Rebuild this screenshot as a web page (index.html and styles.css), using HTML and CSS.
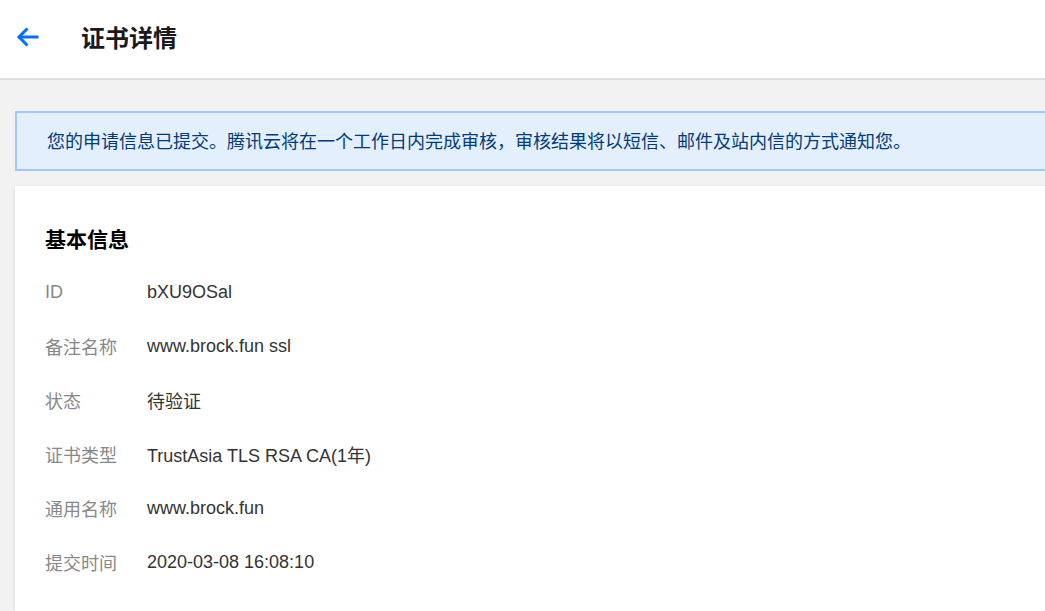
FILE: index.html
```html
<!DOCTYPE html>
<html lang="zh-CN">
<head>
<meta charset="utf-8">
<title>证书详情</title>
<link rel="stylesheet" href="styles.css">
</head>
<body>
<header class="topbar">
  <a class="back" href="#" aria-label="返回">
    <svg width="24" height="22" viewBox="0 0 24 22" fill="none" stroke="#006eff" stroke-width="3" stroke-linecap="butt" stroke-linejoin="miter">
      <path d="M22.5 11H3"/>
      <path d="M11.5 2.5L3 11l8.5 8.5"/>
    </svg>
  </a>
  <h1 class="title">证书详情</h1>
</header>
<main class="content">
  <div class="notice">您的申请信息已提交。腾讯云将在一个工作日内完成审核，审核结果将以短信、邮件及站内信的方式通知您。</div>
  <section class="card">
    <h2 class="card-title">基本信息</h2>
    <dl class="info">
      <div class="row"><dt>ID</dt><dd>bXU9OSal</dd></div>
      <div class="row"><dt>备注名称</dt><dd>www.brock.fun ssl</dd></div>
      <div class="row"><dt>状态</dt><dd>待验证</dd></div>
      <div class="row"><dt>证书类型</dt><dd>TrustAsia TLS RSA CA(1年)</dd></div>
      <div class="row"><dt>通用名称</dt><dd>www.brock.fun</dd></div>
      <div class="row"><dt>提交时间</dt><dd>2020-03-08 16:08:10</dd></div>
    </dl>
  </section>
</main>
</body>
</html>
```

FILE: styles.css
```css
html, body {
  margin: 0;
  padding: 0;
  overflow: hidden;
}
body {
  background: #f2f2f2;
  font-family: "Liberation Sans", "Noto Sans CJK SC", sans-serif;
  color: #333;
  height: 611px;
  display: flex;
  flex-direction: column;
}
.topbar {
  flex: none;
  height: 78px;
  background: #fff;
  border-bottom: 2px solid #dddddd;
  display: flex;
  align-items: center;
  padding-left: 16px;
}
.back {
  display: flex;
  width: 24px;
  height: 22px;
  margin-top: -4px;
}
.title {
  margin: -5px 0 0 41px;
  font-family: "Noto Sans CJK SC", sans-serif;
  font-size: 24px;
  font-weight: 700;
  color: #1a1a1a;
  line-height: 30px;
}
.content {
  flex: 1;
  min-height: 0;
  display: flex;
  flex-direction: column;
  padding: 31px 0 0 15px;
  margin-right: -40px;
}
.notice {
  flex: none;
  border: 2px solid #9dc9ff;
  background: #e3effd;
  height: 53px;
  box-sizing: content-box;
  display: flex;
  align-items: center;
  padding-left: 30px;
  padding-bottom: 3px;
  font-family: "Noto Sans CJK SC", sans-serif;
  font-size: 18px;
  line-height: 24px;
  color: #003a80;
  white-space: nowrap;
}
.card {
  flex: 1;
  min-height: 0;
  margin-top: 15px;
  background: #fff;
  box-shadow: 0 2px 4px rgba(0,0,0,0.12);
  padding: 37px 30px 0;
  overflow: hidden;
}
.card-title {
  margin: 0 0 12px;
  font-family: "Noto Sans CJK SC", sans-serif;
  font-size: 21px;
  font-weight: 700;
  line-height: 30px;
  color: #000;
}
.info {
  margin: 0;
}
.row {
  display: flex;
  height: 54px;
  align-items: center;
  font-size: 18px;
}
.row dt {
  width: 102px;
  color: #888;
}
.row dd {
  margin: 0;
  color: #333;
}
```
